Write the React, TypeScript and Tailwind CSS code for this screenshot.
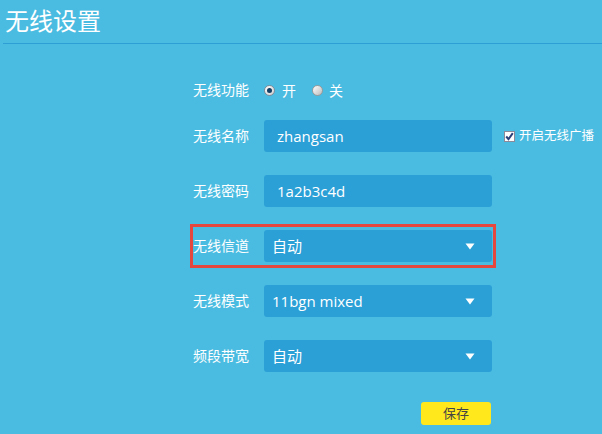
import React from "react";

const font = { fontFamily: '"Open Sans", "Noto Sans CJK SC", sans-serif' };

function Caret() {
  return (
    <svg width="10" height="7" viewBox="0 0 10 7" className="mr-[17px]">
      <path d="M0.5 0.5 L9.5 0.5 L5 6.5 Z" fill="#ffffff" />
    </svg>
  );
}

function Row({ label, children, extra }: { label: string; children: React.ReactNode; extra?: React.ReactNode }) {
  return (
    <div className="flex items-center h-[32px]">
      <div className="w-[71px] text-[14px] text-white leading-none">{label}</div>
      {children}
      {extra}
    </div>
  );
}

function Input({ value }: { value: string }) {
  return (
    <div className="w-[228px] h-[32px] rounded-[3px] bg-[#2ba0d7] flex items-center pl-[13px] text-[15px] text-white">
      {value}
    </div>
  );
}

function Select({ value }: { value: string }) {
  return (
    <div className="w-[228px] h-[32px] rounded-[3px] bg-[#2ba0d7] flex items-center justify-between pl-[8px] text-[15px] text-white">
      <span>{value}</span>
      <Caret />
    </div>
  );
}

export default function App() {
  return (
    <div className="w-[602px] h-[434px] bg-[#4bbce1] overflow-hidden" style={font}>
      <div className="ml-[3px] h-[44px] border-b border-[#2d9fd4] flex items-center">
        <span className="ml-[2px] text-[24px] text-white leading-none mt-[-2px]">无线设置</span>
      </div>
      <div className="pl-[193px] pt-[30px] flex flex-col">
        <Row label="无线功能">
          <div className="flex items-center text-[14px] text-white">
            <span className="w-[11px] h-[11px] rounded-full bg-gradient-to-br from-white to-[#d0d0d0] border border-[#7f8c99] flex items-center justify-center">
              <span className="w-[5px] h-[5px] rounded-full bg-[#123f66]" />
            </span>
            <span className="ml-[7px]">开</span>
            <span className="ml-[16px] w-[11px] h-[11px] rounded-full border border-[#9a9a9a] bg-gradient-to-br from-white to-[#bcbcbc]" />
            <span className="ml-[6px]">关</span>
          </div>
        </Row>
        <div className="mt-[14px] flex flex-col gap-[23px]">
          <Row
            label="无线名称"
            extra={
              <div className="flex items-center ml-[12px] text-[12.5px] text-white">
                <span className="w-[11px] h-[11px] bg-white border border-[#8a8a9a] flex items-center justify-center">
                  <svg width="9" height="9" viewBox="0 0 9 9">
                    <path d="M1.2 4.5 L3.5 7.2 L7.8 1.2" stroke="#2b3f78" strokeWidth="2" fill="none" />
                  </svg>
                </span>
                <span className="ml-[4px]">开启无线广播</span>
              </div>
            }
          >
            <Input value="zhangsan" />
          </Row>
          <Row label="无线密码">
            <Input value="1a2b3c4d" />
          </Row>
          <div className="relative">
            <div className="absolute left-[-3px] top-[-6px] w-[306px] h-[44px] border-[3px] border-[#e5463e] pointer-events-none" />
            <Row label="无线信道">
              <Select value="自动" />
            </Row>
          </div>
          <Row label="无线模式">
            <Select value="11bgn mixed" />
          </Row>
          <Row label="频段带宽">
            <Select value="自动" />
          </Row>
        </div>
        <div className="mt-[30px] pl-[228px] flex">
          <button className="w-[70px] h-[23px] rounded-[3px] bg-[#ffe81c] text-[13px] text-[#444] flex items-center justify-center">
            保存
          </button>
        </div>
      </div>
    </div>
  );
}
